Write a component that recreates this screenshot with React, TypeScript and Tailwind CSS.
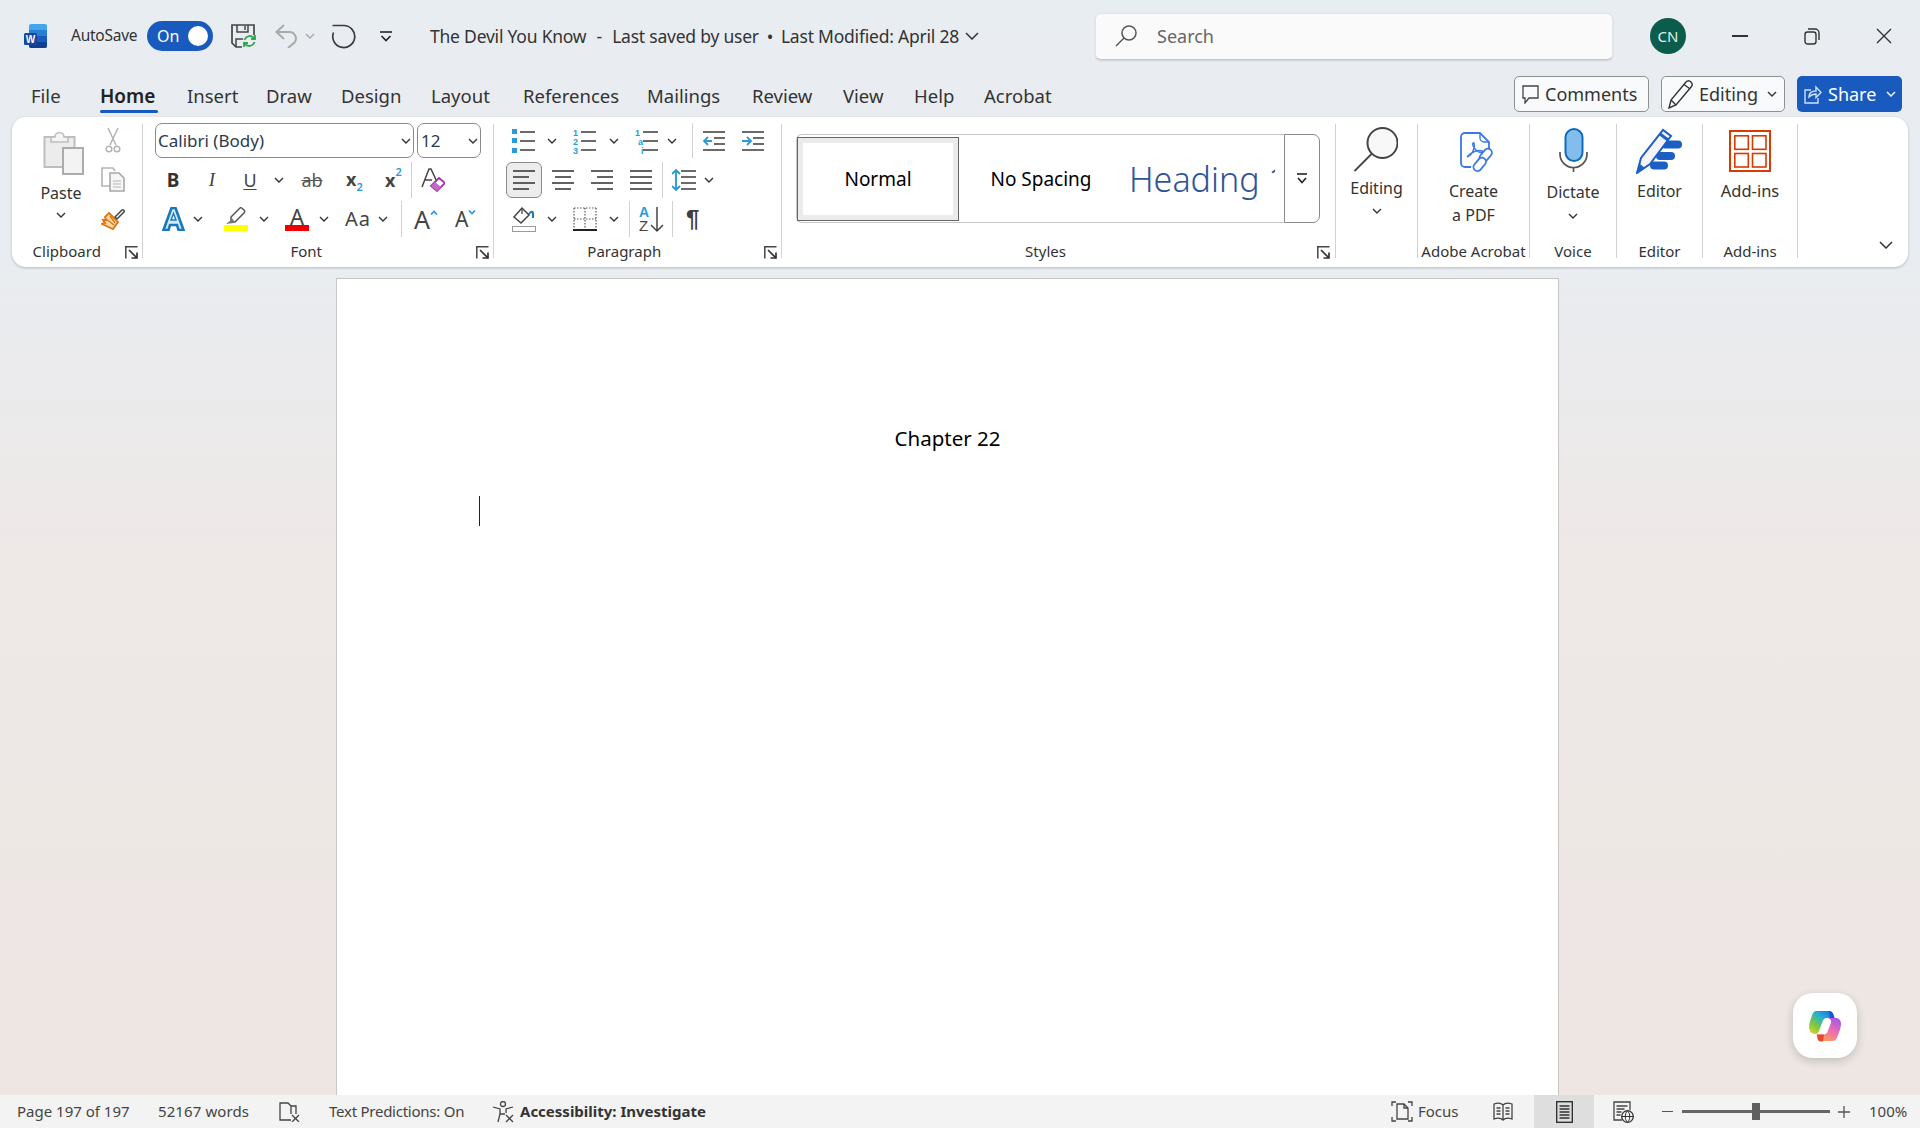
import type { ReactNode } from "react"

const sep = "w-px bg-[#d2d2d2]"

function Chev({ className = "", color = "#333" }: { className?: string; color?: string }) {
  return (
    <svg width="10" height="6" viewBox="0 0 10 6" className={`shrink-0 ${className}`}>
      <path d="M1 1l4 4 4-4" fill="none" stroke={color} strokeWidth="1.4" />
    </svg>
  )
}

function Launcher() {
  return (
    <svg width="13" height="13" viewBox="0 0 13 13" className="shrink-0">
      <path d="M12.500.8H.8v11.700" fill="none" stroke="#444" strokeWidth="1.500" />
      <path d="M4 4l8 8M12 6.500V12H6.500" fill="none" stroke="#333" strokeWidth="1.700" />
    </svg>
  )
}

function Group({ w, label, launcher, children }: { w: string; label: string; launcher?: string; children: ReactNode }) {
  return (
    <div className={`${w} shrink-0 flex flex-col`}>
      <div className="h-[123px]">{children}</div>
      <div className="h-[22px] flex items-center text-[15px] text-[#333]">
        <span className="flex-1 text-center whitespace-nowrap">{label}</span>
        {launcher && (
          <span className={`flex mt-[2px] ${launcher}`}>
            <Launcher />
          </span>
        )}
      </div>
    </div>
  )
}

function Sep() {
  return <div className={`${sep} h-[134px] mt-[7px] shrink-0`} />
}

function RowSep({ className = "" }: { className?: string }) {
  return <div className={`${sep} h-[36px] shrink-0 ${className}`} />
}

function WordIcon() {
  return (
    <svg width="23" height="24" viewBox="0 0 23 24" className="shrink-0">
      <rect x="5" y="0" width="18" height="24" rx="2" fill="#41a5ee" />
      <rect x="5" y="6" width="18" height="6" fill="#2b7cd3" />
      <rect x="5" y="12" width="18" height="6" fill="#185abd" />
      <path d="M5 18h18v4a2 2 0 0 1-2 2H7a2 2 0 0 1-2-2z" fill="#103f91" />
      <rect x="0" y="9" width="13" height="12" rx="1.5" fill="#15479f" />
      <text x="6.5" y="18.5" textAnchor="middle" fontSize="10" fontWeight="700" fill="#fff" fontFamily="Liberation Sans">W</text>
    </svg>
  )
}

function SaveIcon() {
  return (
    <svg width="25" height="24" viewBox="0 0 25 24" className="shrink-0">
      <path d="M11 23H5l-4-4V1h22v10" fill="none" stroke="#444" strokeWidth="1.7" />
      <path d="M6 1v7h11V1M14 2v4M5 23v-8h7" fill="none" stroke="#444" strokeWidth="1.5" />
      <path d="M13.5 16a5.5 5.5 0 0 1 9-2.5l1 1M24 11v4h-4" fill="none" stroke="#2fa84f" strokeWidth="1.8" />
      <path d="M23.5 18a5.5 5.5 0 0 1-9 2.5l-1-1M13 23v-4h4" fill="none" stroke="#2fa84f" strokeWidth="1.8" />
    </svg>
  )
}

function Lines({ kind }: { kind: "left" | "center" | "right" | "justify" }) {
  const rows = {
    left: ["M0 1h22", "M0 7h16", "M0 13h22", "M0 19h16"],
    center: ["M0 1h22", "M3 7h16", "M0 13h22", "M3 19h16"],
    right: ["M0 1h22", "M6 7h16", "M0 13h22", "M6 19h16"],
    justify: ["M0 1h22", "M0 7h22", "M0 13h22", "M0 19h22"],
  }[kind]
  return (
    <svg width="22" height="20" viewBox="0 0 22 20" className="shrink-0">
      {rows.map((d) => (
        <path key={d} d={d} stroke="#3b3b3b" strokeWidth="1.6" />
      ))}
    </svg>
  )
}

function ListIcon({ kind }: { kind: "bullet" | "number" | "multi" }) {
  const small = "Liberation Sans"
  return (
    <svg width="24" height="24" viewBox="0 0 24 24" className="shrink-0 overflow-visible">
      <path d="M8 3h15M8 12h15M8 21h15" stroke="#3b3b3b" strokeWidth="1.5" />
      {kind === "bullet" && (
        <>
          <rect x="0" y="0" width="5" height="5" fill="#2b9ad8" />
          <rect x="0" y="9" width="5" height="5" fill="#2b9ad8" />
          <rect x="0" y="19" width="5" height="5" fill="#2b9ad8" />
        </>
      )}
      {kind === "number" &&
        ["1", "2", "3"].map((n, i) => (
          <text key={n} x="0" y={7 + i * 9} fontSize="9" fontWeight="700" fill="#2b9ad8" fontFamily={small}>{n}</text>
        ))}
      {kind === "multi" &&
        ["1", "a", "i"].map((n, i) => (
          <text key={n} x={i * 3} y={7 + i * 9} fontSize="9" fontWeight="700" fill="#2b9ad8" fontFamily={small}>{n}</text>
        ))}
    </svg>
  )
}

function IndentIcon({ more }: { more?: boolean }) {
  return (
    <svg width="22" height="20" viewBox="0 0 22 20" className="shrink-0">
      <path d="M0 1h22M0 19h22M11 7h11M11 13h11" stroke="#3b3b3b" strokeWidth="1.5" />
      {more ? (
        <path d="M0 10h8M5 6l4 4-4 4" fill="none" stroke="#2b9ad8" strokeWidth="1.8" />
      ) : (
        <path d="M9 10H1M5 6l-4 4 4 4" fill="none" stroke="#2b9ad8" strokeWidth="1.8" />
      )}
    </svg>
  )
}

function CopilotLogo() {
  return (
    <svg width="32" height="32" viewBox="0 0 32 32">
      <defs>
        <linearGradient id="cpA" x1="0" y1="1" x2="0.8" y2="0">
          <stop offset="0" stopColor="#f3d32c" />
          <stop offset="0.35" stopColor="#7dc83e" />
          <stop offset="0.7" stopColor="#22b0d8" />
          <stop offset="1" stopColor="#1f6fe0" />
        </linearGradient>
        <linearGradient id="cpB" x1="0.8" y1="0" x2="0.2" y2="1">
          <stop offset="0" stopColor="#a855e8" />
          <stop offset="0.5" stopColor="#ee6fb0" />
          <stop offset="1" stopColor="#fca24a" />
        </linearGradient>
      </defs>
      <path d="M8 1h12c2.5 0 3.5 1.5 4.5 4l1 3h-8c-2.5 0-3.5 2-4.5 5l-3 8c-1 2.500-2 3-4 3-3.500 0-6-3-6-7 0-4 3-12 4-14C5 1.500 6 1 8 1z" fill="url(#cpA)" />
      <path d="M20 1c2 0 3.500 1 4.500 4l1 3H21z" fill="#1557cf" />
      <path d="M17.500 8H27c3 0 5 2.500 5 5.500 0 4-2.500 11-4 14-1 2.500-2.500 3.500-5 3.500H12c-1.500 0-3-1-3.500-3l-1-3.500h7c2 0 3.500-1 4.500-4l3-8c.7-2-1-4.500-4.500-4.500z" fill="url(#cpB)" />
      <path d="M8 24.500h7l-1 7H12c-2 0-3-1-3.500-3z" fill="#e8452f" />
      <path d="M19 11.500l-3.500 11h-3l3.500-11z" fill="#fff" />
    </svg>
  )
}

export default function App() {
  const tabs = [
    { name: "File", w: "w-[69px]" },
    { name: "Home", w: "w-[87px]" },
    { name: "Insert", w: "w-[79px]" },
    { name: "Draw", w: "w-[75px]" },
    { name: "Design", w: "w-[90px]" },
    { name: "Layout", w: "w-[92px]" },
    { name: "References", w: "w-[124px]" },
    { name: "Mailings", w: "w-[105px]" },
    { name: "Review", w: "w-[91px]" },
    { name: "View", w: "w-[71px]" },
    { name: "Help", w: "w-[70px]" },
    { name: "Acrobat", w: "w-[80px]" },
  ]

  return (
    <div className="relative w-[1920px] h-[1128px] overflow-hidden flex flex-col font-['Noto_Sans',sans-serif] text-[#333] bg-[linear-gradient(180deg,#e8edf2_0%,#e9ecf0_24%,#eee8e6_50%,#ede6e3_100%)]">
      {/* Title bar */}
      <div className="h-[72px] shrink-0 flex items-center">
        <div className="ml-[24px] flex">
          <WordIcon />
        </div>
        <span className="ml-[24px] w-[76px] text-[15.5px] tracking-[-0.25px]">AutoSave</span>
        <div className="w-[66px] h-[30px] rounded-full bg-[#185abd] flex items-center pl-[10px] text-white text-[16px]">
          On
          <span className="ml-auto mr-[5px] w-[20px] h-[20px] rounded-full bg-white" />
        </div>
        <div className="ml-[18px] flex">
          <SaveIcon />
        </div>
        <svg width="22" height="24" viewBox="0 0 22 24" className="ml-[19px] shrink-0">
          <path d="M9 1L1.500 8l7.500 7M1.500 8h13a6.500 6.500 0 0 1 5 10.500L13 24" fill="none" stroke="#a9a9a9" strokeWidth="2" />
        </svg>
        <Chev className="ml-[8px]" color="#a9a9a9" />
        <svg width="25" height="25" viewBox="0 0 25 25" className="ml-[16px] shrink-0">
          <path d="M1.500 1.500H12.500a11 11 0 1 1-10 7" fill="none" stroke="#3b3b3b" strokeWidth="1.700" />
        </svg>
        <svg width="12" height="11" viewBox="0 0 12 11" className="ml-[24px] shrink-0">
          <path d="M0 1h12" stroke="#222" strokeWidth="1.6" />
          <path d="M1.500 5l4.500 4.500L10.500 5" fill="none" stroke="#222" strokeWidth="1.6" />
        </svg>
        <span className="ml-[38px] w-[528px] text-[17.5px] whitespace-pre tracking-[-0.22px]">
          The Devil You Know  <span className="mx-[1.500px]">-</span>  Last saved by user <span className="mx-[3.500px]">•</span> Last Modified: April 28
        </span>
        <svg width="14" height="8" viewBox="0 0 14 8" className="ml-[7px] shrink-0">
          <path d="M1 1l6 6 6-6" fill="none" stroke="#333" strokeWidth="1.5" />
        </svg>
        <div className="ml-[116px] w-[518px] h-[47px] bg-[#fafafa] rounded-[6px] border border-[#e2e4e7] border-b-[#c4c6c8] shadow-[0_1px_2px_rgba(0,0,0,0.12)] flex items-center pl-[19px]">
          <svg width="22" height="22" viewBox="0 0 22 22" className="shrink-0">
            <circle cx="14" cy="8" r="7" fill="none" stroke="#555" strokeWidth="1.5" />
            <path d="M9 13l-8 8" stroke="#555" strokeWidth="1.5" />
          </svg>
          <span className="ml-[20px] text-[18px] text-[#666]">Search</span>
        </div>
        <div className="ml-[37px] w-[36px] h-[36px] rounded-full bg-[#0b5c4c] text-[#dff1ec] text-[15px] flex items-center justify-center">CN</div>
        <div className="ml-[46px] w-[16px] h-[1.500px] bg-[#333]" />
        <svg width="16" height="17" viewBox="0 0 16 17" className="ml-[56px] shrink-0">
          <rect x="1" y="4" width="11" height="12" rx="2.500" fill="none" stroke="#333" strokeWidth="1.4" />
          <path d="M4 1h7a4 4 0 0 1 4 4v7" fill="none" stroke="#333" strokeWidth="1.4" />
        </svg>
        <svg width="16" height="16" viewBox="0 0 16 16" className="ml-[56px] shrink-0">
          <path d="M1 1l14 14M15 1L1 15" stroke="#333" strokeWidth="1.4" />
        </svg>
      </div>

      {/* Tabs */}
      <div className="h-[45px] shrink-0 flex">
        <div className="ml-[31px] flex items-center pt-[3px] text-[18.500px]">
          {tabs.map((t) => (
            <div key={t.name} className={`${t.w} relative`}>
              <span className={t.name === "Home" ? "font-semibold text-[#222] text-[19px]" : ""}>{t.name}</span>
              {t.name === "Home" && <div className="absolute left-0 top-[28px] w-[58px] h-[3px] rounded-full bg-[#185abd]" />}
            </div>
          ))}
        </div>
        <div className="ml-auto mr-[18px] mt-[4px] flex gap-[12px] h-[36px] text-[18px]">
          <div className="w-[135px] rounded-[5px] border border-[#8f8f8f] bg-white/70 flex items-center pl-[7px]">
            <svg width="17" height="19" viewBox="0 0 17 19" className="shrink-0">
              <path d="M1 1h15v12H7l-4 5v-5H1z" fill="none" stroke="#444" strokeWidth="1.3" />
            </svg>
            <span className="ml-[6px]">Comments</span>
          </div>
          <div className="w-[124px] rounded-[5px] border border-[#8f8f8f] bg-white/70 flex items-center pl-[6px]">
            <svg width="25" height="29" viewBox="0 0 25 29" className="shrink-0">
              <path d="M1 28l2-8L18 2c1.500-1.500 3.500-1.500 5 0s1.500 3 .5 4.500L8 25zM3 20l5 5M16 4.500l5.500 4" fill="none" stroke="#333" strokeWidth="1.4" />
            </svg>
            <span className="ml-[6px]">Editing</span>
            <Chev className="ml-[9px]" />
          </div>
          <div className="w-[105px] rounded-[5px] bg-[#185abd] text-white flex items-center pl-[7px]">
            <svg width="18" height="19" viewBox="0 0 18 19" className="shrink-0">
              <path d="M7 5H1v13h13v-5" fill="none" stroke="#cfe0fa" strokeWidth="1.4" />
              <path d="M5 12c0-4 3-6 7-6V2l5 5.500-5 5V9c-3 0-5 1-7 3z" fill="none" stroke="#cfe0fa" strokeWidth="1.4" />
            </svg>
            <span className="ml-[6px]">Share</span>
            <Chev className="ml-[10px]" color="#fff" />
          </div>
        </div>
      </div>

      {/* Ribbon */}
      <div className="mx-[12px] h-[150px] shrink-0 rounded-[14px] bg-white shadow-[0_1px_3px_rgba(0,0,0,0.22)] flex">
        <Group w="w-[130px]" label="Clipboard" launcher="ml-[3px] mr-[4.500px]">
          <div className="flex ml-[9px]">
            <div className="w-[80px] flex flex-col items-center pt-[13px]">
              <svg width="41" height="45" viewBox="0 0 41 45" className="ml-[4px]">
                <path d="M1.500 7h30v30h-30z" fill="#ececec" stroke="#bdbdbd" strokeWidth="2" />
                <path d="M8 7h4a4.500 4.500 0 0 1 9 0h4v5H8z" fill="#f4f4f4" stroke="#bdbdbd" strokeWidth="1.6" />
                <rect x="20" y="18" width="20" height="26" fill="#f3f3f3" stroke="#ababab" strokeWidth="2" />
              </svg>
              <span className="mt-[6px] h-[24px] text-[16px] leading-[24px]">Paste</span>
              <Chev className="mt-[7px]" />
            </div>
            <div className="w-[24px] flex flex-col items-center pt-[11px]">
              <svg width="16" height="25" viewBox="0 0 16 25">
                <path d="M3 0l8 17M13 0L5 17" stroke="#b4b4b4" strokeWidth="1.5" />
                <circle cx="4" cy="21" r="2.800" fill="none" stroke="#b4b4b4" strokeWidth="1.500" />
                <circle cx="12" cy="21" r="2.800" fill="none" stroke="#b4b4b4" strokeWidth="1.500" />
              </svg>
              <svg width="24" height="25" viewBox="0 0 24 25" className="mt-[14px]">
                <path d="M9 19H1V1h11l2 3" fill="none" stroke="#b4b4b4" strokeWidth="1.600" />
                <path d="M9 6h9l5 5v13H9z" fill="#f6f6f6" stroke="#a8a8a8" strokeWidth="1.600" />
                <path d="M12 14h8M12 17h8M12 20h8" stroke="#b4b4b4" strokeWidth="1.200" />
              </svg>
              <svg width="24" height="23" viewBox="0 0 24 23" className="mt-[15px]">
                <path d="M8 6l9 9-5 7-11-5 3-1-2-3 3 0-1-3z" fill="#fbd9ae" stroke="#e2760c" strokeWidth="1.900" />
                <path d="M5 12l8 6M9 9l5 7" stroke="#e2760c" strokeWidth="1.300" />
                <path d="M14 10l7-7c1-1 3 1 2 2l-7 7z" fill="#fff" stroke="#444" strokeWidth="1.500" />
              </svg>
            </div>
          </div>
        </Group>
        <Sep />

        <Group w="w-[350px]" label="Font" launcher="ml-[6px] mr-[4.500px]">
          <div className="pt-[6px] pl-[12px] flex flex-col">
            <div className="flex gap-[3px] h-[35px]">
              <div className="w-[259px] rounded-[7px] border border-[#8a8a8a] flex items-center pl-[2px] text-[17px] text-[#2b3a4e]">
                Calibri (Body)
                <Chev className="ml-auto mr-[2px]" />
              </div>
              <div className="w-[64px] rounded-[7px] border border-[#8a8a8a] flex items-center pl-[3px] text-[17px] text-[#2b3a4e]">
                12
                <Chev className="ml-auto mr-[2px]" />
              </div>
            </div>
            {/* row two */}
            <div className="mt-[4px] -ml-[12px] h-[36px] flex items-center">
              <span className="ml-[22px] w-[16px] text-center text-[19px] font-bold text-[#333]">B</span>
              <span className="ml-[24px] w-[14px] text-center text-[19px] italic font-['Liberation_Serif',serif] text-[#444]">I</span>
              <span className="ml-[23px] w-[16px] text-center text-[18px] leading-[20px] underline underline-offset-2 text-[#444]">U</span>
              <Chev className="ml-[16px]" />
              <span className="ml-[16px] w-[24px] text-center text-[18px] leading-[20px] line-through text-[#555]">ab</span>
              <span className="ml-[22px] flex items-start w-[17px] text-[18px] font-bold leading-[22px] text-[#444]">
                x
                <span className="mt-[13px] text-[11px] leading-[12px] text-[#2b9ad8] font-semibold">2</span>
              </span>
              <span className="ml-[22px] flex items-start w-[17px] text-[18px] font-bold leading-[22px] text-[#444]">
                x
                <span className="-mt-[3px] text-[11px] leading-[12px] text-[#2b9ad8] font-semibold">2</span>
              </span>
              <RowSep className="ml-[9px]" />
              <svg width="24" height="24" viewBox="0 0 24 24" className="ml-[9px] shrink-0">
                <path d="M1 19L8 1h2l6 13M4 12h7" fill="none" stroke="#444" strokeWidth="1.500" />
                <path d="M10 18l8-8 6 5-8 8z" fill="#fff" stroke="#a035a5" strokeWidth="1.800" />
                <path d="M10 18l4-4 6 5-4 4z" fill="#c26ac6" />
              </svg>
            </div>
            {/* row three */}
            <div className="mt-[3px] -ml-[12px] h-[36px] flex items-center">
              <svg width="23" height="24" viewBox="0 0 23 24" className="ml-[19px] shrink-0">
                <path d="M1.500 23L9.500 1h4l8 22h-5l-1.500-5H8l-1.500 5z" fill="#d4eafa" stroke="#1878bd" strokeWidth="2.600" />
                <path d="M9 13l2.500-6.500L14 13z" fill="#fff" stroke="#1878bd" strokeWidth="1.400" />
              </svg>
              <Chev className="ml-[8px]" />
              <div className="ml-[21px] w-[24px] flex flex-col items-center shrink-0">
                <svg width="22" height="18" viewBox="0 0 22 18">
                  <path d="M6 10l9-9c1-1 3 1 4 2s1 2 0 3l-9 9H6z" fill="#fff" stroke="#555" strokeWidth="1.500" />
                  <path d="M1 17l5-4 3 3z" fill="#777" />
                  <path d="M6 10l4 5-4 1z" fill="#777" />
                </svg>
                <div className="w-[24px] h-[6px] bg-[#ffff00]" />
              </div>
              <Chev className="ml-[11px]" />
              <div className="ml-[16px] w-[24px] flex flex-col items-center shrink-0">
                <span className="h-[18px] text-[22px] leading-[18px] text-[#444]">A</span>
                <div className="w-[24px] h-[6px] bg-[#ee0000]" />
              </div>
              <Chev className="ml-[10px]" />
              <span className="ml-[16px] w-[25px] text-[20px] tracking-[1px] text-[#444] whitespace-nowrap">Aa</span>
              <Chev className="ml-[8px]" />
              <RowSep className="ml-[13px]" />
              <span className="ml-[12px] text-[25px] leading-[30px] text-[#444]">A</span>
              <svg width="8" height="5" viewBox="0 0 8 5" className="mb-[14px] shrink-0">
                <path d="M1 4.500l3-3 3 3" fill="none" stroke="#2b9ad8" strokeWidth="1.700" />
              </svg>
              <span className="ml-[17px] text-[21px] leading-[30px] text-[#444]">A</span>
              <svg width="8" height="5" viewBox="0 0 8 5" className="mb-[14px] shrink-0">
                <path d="M1 .5l3 3 3-3" fill="none" stroke="#2b9ad8" strokeWidth="1.700" />
              </svg>
            </div>
          </div>
        </Group>
        <Sep />

        <Group w="w-[287px]" label="Paragraph" launcher="ml-[9px] mr-[4.500px]">
          <div className="pt-[6px] flex flex-col">
            <div className="h-[35px] flex items-center">
              <div className="ml-[18px] flex"><ListIcon kind="bullet" /></div>
              <Chev className="ml-[11px]" />
              <div className="ml-[16px] flex"><ListIcon kind="number" /></div>
              <Chev className="ml-[12px]" />
              <div className="ml-[16px] flex"><ListIcon kind="multi" /></div>
              <Chev className="ml-[8px]" />
              <div className={`${sep} h-[35px] ml-[15px]`} />
              <div className="ml-[10px] flex"><IndentIcon /></div>
              <div className="ml-[17px] flex"><IndentIcon more /></div>
            </div>
            <div className="mt-[4px] h-[36px] flex items-center">
              <div className="ml-[12px] w-[36px] h-[36px] rounded-[6px] border border-[#8a8a8a] bg-[#ececec] flex items-center justify-center">
                <Lines kind="left" />
              </div>
              <div className="ml-[10px] flex"><Lines kind="center" /></div>
              <div className="ml-[17px] flex"><Lines kind="right" /></div>
              <div className="ml-[17px] flex"><Lines kind="justify" /></div>
              <RowSep className="ml-[10px]" />
              <svg width="24" height="24" viewBox="0 0 24 24" className="ml-[9px] shrink-0">
                <path d="M9 3h15M9 9h15M9 15h15M9 21h15" stroke="#3b3b3b" strokeWidth="1.500" />
                <path d="M4 2v20M0 6l4-4 4 4M0 18l4 4 4-4" fill="none" stroke="#2b9ad8" strokeWidth="1.900" />
              </svg>
              <Chev className="ml-[8px]" />
            </div>
            <div className="mt-[3px] h-[36px] flex items-center">
              <svg width="24" height="26" viewBox="0 0 24 26" className="ml-[18px] shrink-0">
                <path d="M2 11l8-9 7 7-8 8z" fill="#fff" stroke="#444" strokeWidth="1.500" />
                <path d="M10 2v6" stroke="#444" strokeWidth="1.300" />
                <path d="M17 8c2-3 4-3 4 0v4" fill="none" stroke="#1f78b4" strokeWidth="2" />
                <rect x=".5" y="20.500" width="23" height="5" fill="#fff" stroke="#999" />
              </svg>
              <Chev className="ml-[11px]" />
              <svg width="24" height="24" viewBox="0 0 24 24" className="ml-[16px] shrink-0">
                <path d="M1 1h22M1 1v21M23 1v21M12 1v21M1 12h22" fill="none" stroke="#555" strokeWidth="1.200" strokeDasharray="1.500 1.500" />
                <path d="M0 23h24" stroke="#222" strokeWidth="2" />
              </svg>
              <Chev className="ml-[12px]" />
              <RowSep className="ml-[10px]" />
              <div className="ml-[9px] flex w-[24px] shrink-0">
                <svg width="24" height="28" viewBox="0 0 24 28" className="overflow-visible">
                  <text x="0" y="12" fontSize="14" fontWeight="700" fill="#2b9ad8" fontFamily="Liberation Sans">A</text>
                  <text x="0" y="26" fontSize="15" fill="#444" fontFamily="Liberation Sans">Z</text>
                  <path d="M18 2v24M12 20l6 6 6-6" fill="none" stroke="#444" strokeWidth="1.500" />
                </svg>
              </div>
              <RowSep className="ml-[9px]" />
              <span className="ml-[13px] text-[24px] leading-[30px] font-bold font-['Liberation_Sans',sans-serif] text-[#3f3f3f]">¶</span>
            </div>
          </div>
        </Group>
        <Sep />

        <Group w="w-[553px]" label="Styles" launcher="ml-[8px] mr-[5px]">
          <div className="pt-[17px] pl-[14px] flex h-[106px]">
            <div className="w-[488px] h-[89px] rounded-l-[6px] border border-[#c8c8c8] border-r-0 pt-[2px] flex">
              <div className="w-[162px] h-[84px] shrink-0 border-[1.5px] border-[#666] bg-white flex">
                <div className="flex-1 border-[5px] border-[#ebebeb] flex items-center justify-center text-[19px] text-black">Normal</div>
              </div>
              <div className="w-[164px] h-[84px] shrink-0 flex items-center justify-center text-[19px] text-black">No Spacing</div>
              <div className="w-[152px] h-[84px] pl-[6px] flex items-center text-[34px] font-light text-[#2f5496] whitespace-nowrap overflow-hidden">Heading 1</div>
            </div>
            <div className="w-[36px] h-[89px] shrink-0 rounded-r-[7px] border border-[#8a8a8a] flex items-center justify-center">
              <svg width="12" height="11" viewBox="0 0 12 11">
                <path d="M1 1h10" stroke="#222" strokeWidth="1.600" />
                <path d="M2 5l4 4.500L10 5" fill="none" stroke="#222" strokeWidth="1.600" />
              </svg>
            </div>
          </div>
        </Group>
        <Sep />

        <Group w="w-[81px]" label="">
          <div className="flex flex-col items-center pt-[10px]">
            <svg width="44" height="45" viewBox="0 0 44 45" className="-ml-[2px]">
              <circle cx="28.500" cy="16" r="15" fill="#f8f8f8" stroke="#444" strokeWidth="2" />
              <path d="M17.500 27L.5 44" stroke="#444" strokeWidth="1.800" />
            </svg>
            <span className="mt-[5px] h-[22px] text-[16px] leading-[22px]">Editing</span>
            <Chev className="mt-[9px]" />
          </div>
        </Group>
        <Sep />

        <Group w="w-[111px]" label="Adobe Acrobat">
          <div className="flex flex-col items-center pt-[15px]">
            <svg width="38" height="43" viewBox="0 0 38 43" className="ml-[11px]">
              <path d="M11 35H5a4 4 0 0 1-4-4V5a4 4 0 0 1 4-4h15l9 9v8" fill="none" stroke="#3b78e7" strokeWidth="1.800" />
              <path d="M20 1v5a4 4 0 0 0 4 4h5" fill="none" stroke="#3b78e7" strokeWidth="1.400" />
              <path d="M7 25c3-1 6-5 7-9s0-6-1-5 0 4 3 7 6 3 7 2-3-2-7-1-8 5-9 6z" fill="none" stroke="#3b78e7" strokeWidth="1.400" />
              <rect x="22" y="16" width="8" height="15" rx="4" transform="rotate(40 26 23)" fill="#fff" stroke="#3b78e7" strokeWidth="1.800" />
              <rect x="16" y="25" width="8" height="15" rx="4" transform="rotate(40 20 32)" fill="#fff" stroke="#3b78e7" strokeWidth="1.800" />
            </svg>
            <div className="mt-[4px] text-[16px] leading-[24px] text-center">Create<br />a PDF</div>
          </div>
        </Group>
        <Sep />

        <Group w="w-[86px]" label="Voice">
          <div className="flex flex-col items-center pt-[11px]">
            <svg width="29" height="44" viewBox="0 0 29 44">
              <rect x="6.500" y="1" width="17" height="32" rx="8.500" fill="#82bdec" stroke="#0f6cbd" strokeWidth="2" />
              <path d="M1 24v2a13.500 13.500 0 0 0 27 0v-2M14.500 39v5" fill="none" stroke="#555" strokeWidth="1.700" />
            </svg>
            <span className="mt-[9px] h-[22px] text-[16px] leading-[22px]">Dictate</span>
            <Chev className="mt-[10px]" />
          </div>
        </Group>
        <Sep />

        <Group w="w-[85px]" label="Editor">
          <div className="flex flex-col items-center pt-[11px]">
            <svg width="47" height="46" viewBox="0 0 47 46">
              <rect x="25" y="12.500" width="21" height="8" rx="4" fill="#1c5fc4" />
              <rect x="20" y="24" width="19" height="8" rx="4" fill="#1c5fc4" />
              <rect x="14" y="33.500" width="18" height="8" rx="4" fill="#1c5fc4" />
              <path d="M1 45l4-15L27 2l8 6-21 28z" fill="#f4f4f8" stroke="#1c5fc4" strokeWidth="2" />
              <path d="M24 6l8 6" stroke="#1c5fc4" strokeWidth="3" />
              <path d="M1 45l3-9 5 4z" fill="#1c5fc4" />
            </svg>
            <span className="mt-[6px] h-[22px] text-[16px] leading-[22px]">Editor</span>
          </div>
        </Group>
        <Sep />

        <Group w="w-[94px]" label="Add-ins">
          <div className="flex flex-col items-center pt-[13px]">
            <svg width="42" height="42" viewBox="0 0 42 42">
              <rect x="1" y="1" width="40" height="40" fill="#fff" stroke="#d83b01" strokeWidth="2" />
              <rect x="5.800" y="5.800" width="13.500" height="13.500" fill="none" stroke="#d83b01" strokeWidth="1.600" />
              <rect x="23.500" y="5.800" width="13.500" height="13.500" fill="none" stroke="#d83b01" strokeWidth="1.600" />
              <rect x="5.800" y="23.500" width="13.500" height="13.500" fill="none" stroke="#d83b01" strokeWidth="1.600" />
              <rect x="23.500" y="23.500" width="13.500" height="13.500" fill="none" stroke="#d83b01" strokeWidth="1.600" />
            </svg>
            <span className="mt-[8px] h-[22px] text-[16.500px] leading-[22px]">Add-ins</span>
          </div>
        </Group>
        <Sep />

        <div className="flex-1 flex justify-end items-end pr-[15px] pb-[18px]">
          <svg width="14" height="8" viewBox="0 0 14 8">
            <path d="M1 1l6 6 6-6" fill="none" stroke="#333" strokeWidth="1.500" />
          </svg>
        </div>
      </div>

      {/* Document */}
      <div className="flex-1 min-h-0 pt-[11px] pl-[336px] overflow-hidden">
        <div className="w-[1223px] h-full bg-white border border-b-0 border-[#c6c6c6]">
          <div className="pt-[145px] text-center text-[20.500px] leading-[28px] text-black">Chapter 22</div>
          <div className="ml-[142px] mt-[44px] w-px h-[30px] bg-[#222]" />
        </div>
      </div>

      {/* Status bar */}
      <div className="h-[33px] shrink-0 bg-[#f3f3f3] flex items-center text-[15px] text-[#444]">
        <span className="ml-[17px] w-[141px]">Page 197 of 197</span>
        <span className="w-[121px] tracking-[0.1px]">52167 words</span>
        <svg width="22" height="20" viewBox="0 0 22 20" className="shrink-0">
          <path d="M12 18H1V1h8l3 3v8M9 1l3 3h5v8" fill="none" stroke="#444" strokeWidth="1.300" />
          <path d="M13 13l7 7M20 13l-7 7" stroke="#444" strokeWidth="1.300" />
        </svg>
        <span className="ml-[28px] w-[163px] tracking-[-0.25px]">Text Predictions: On</span>
        <svg width="24" height="22" viewBox="0 0 24 22" className="shrink-0">
          <circle cx="11" cy="3" r="2.500" fill="none" stroke="#444" strokeWidth="1.300" />
          <path d="M1 6l7 2v5l-2 8M21 6l-7 2v4M8 13h5" fill="none" stroke="#444" strokeWidth="1.300" />
          <path d="M14 14l7 7M21 14l-7 7" stroke="#444" strokeWidth="1.300" />
        </svg>
        <span className="ml-[4px] font-bold text-[#333]">Accessibility: Investigate</span>
        <div className="ml-auto w-[529px] h-full flex items-center shrink-0">
          <svg width="22" height="21" viewBox="0 0 22 21" className="shrink-0">
            <path d="M1 5V1h4M17 1h4v4M1 16v4h4M17 20h4v-4" fill="none" stroke="#444" strokeWidth="1.300" />
            <path d="M6 3h7l4 4v11H6zM13 3v4h4" fill="none" stroke="#444" strokeWidth="1.300" />
          </svg>
          <span className="ml-[5px] w-[39px]">Focus</span>
          <svg width="20" height="20" viewBox="0 0 20 20" className="ml-[36px] shrink-0">
            <path d="M10 3C8 1 4 1 1 2v15c3-1 7-1 9 1 2-2 6-2 9-1V2c-3-1-7-1-9 1zM10 3v15M3.500 6h4M3.500 9h4M3.500 12h4M12.500 6h4M12.500 9h4M12.500 12h4" fill="none" stroke="#444" strokeWidth="1.300" />
          </svg>
          <div className="ml-[21px] w-[60px] h-full bg-[#dedede] flex items-center justify-center">
            <svg width="17" height="22" viewBox="0 0 17 22">
              <rect x=".7" y=".7" width="15.600" height="20.600" fill="none" stroke="#333" strokeWidth="1.400" />
              <path d="M3.500 5h10M3.500 8h10M3.500 11h10M3.500 14h10M3.500 17h10" stroke="#333" strokeWidth="1.300" />
            </svg>
          </div>
          <svg width="21" height="22" viewBox="0 0 21 22" className="ml-[19px] shrink-0">
            <path d="M9 19H1V1h16v8M3.500 5h11M3.500 8h8M3.500 11h5M3.500 14h4" fill="none" stroke="#444" strokeWidth="1.300" />
            <circle cx="14.500" cy="15.500" r="5.800" fill="none" stroke="#333" strokeWidth="1.300" />
            <path d="M8.700 15.500h11.600M14.500 9.700c-3 3-3 9 0 11.600M14.500 9.700c3 3 3 9 0 11.600" fill="none" stroke="#333" strokeWidth="1" />
          </svg>
          <div className="ml-[28px] w-[11px] h-[1.500px] bg-[#555]" />
          <div className="relative ml-[9px] w-[148px] h-[2.500px] bg-[#666]">
            <div className="absolute left-[70px] -top-[7px] w-[8px] h-[17px] bg-[#5f5f5f]" />
          </div>
          <svg width="12" height="12" viewBox="0 0 12 12" className="ml-[8px] shrink-0">
            <path d="M0 6h12M6 0v12" stroke="#555" strokeWidth="1.300" />
          </svg>
          <span className="ml-[19px]">100%</span>
        </div>
      </div>

      {/* Copilot button */}
      <div className="absolute left-[1793px] top-[993px] w-[64px] h-[65px] rounded-[20px] bg-white shadow-[0_3px_10px_rgba(0,0,0,0.18)] flex items-center justify-center">
        <CopilotLogo />
      </div>
    </div>
  )
}
